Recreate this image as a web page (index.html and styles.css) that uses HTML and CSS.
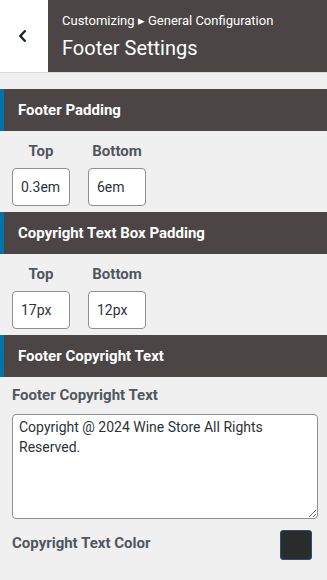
FILE: index.html
```html
<!DOCTYPE html>
<html>
<head>
<meta charset="utf-8">
<link rel="stylesheet" href="styles.css">
</head>
<body>
<header class="topbar">
  <div class="back">
    <svg width="12" height="14" viewBox="0 0 12 14"><path d="M8.5 1.5 L3.3 7 L8.5 12.5" fill="none" stroke="#1d2327" stroke-width="2.4"/></svg>
  </div>
  <div class="title-area">
    <div class="crumb">Customizing ▸ General Configuration</div>
    <div class="title">Footer Settings</div>
  </div>
</header>
<main class="content">
  <section class="section first">
    <h3 class="sec-head">Footer Padding</h3>
    <div class="pair">
      <div class="field"><label class="lbl">Top</label><input class="inp" value="0.3em"></div>
      <div class="field"><label class="lbl">Bottom</label><input class="inp" value="6em"></div>
    </div>
  </section>
  <section class="section">
    <h3 class="sec-head">Copyright Text Box Padding</h3>
    <div class="pair">
      <div class="field"><label class="lbl">Top</label><input class="inp" value="17px"></div>
      <div class="field"><label class="lbl">Bottom</label><input class="inp" value="12px"></div>
    </div>
  </section>
  <section class="section">
    <h3 class="sec-head">Footer Copyright Text</h3>
    <div class="block">
      <div class="blabel">Footer Copyright Text</div>
      <textarea class="ta">Copyright @ 2024 Wine Store All Rights Reserved.</textarea>
      <div class="color-row">
        <span class="blabel">Copyright Text Color</span>
        <span class="swatch"></span>
      </div>
    </div>
  </section>
</main>
</body>
</html>
```

FILE: styles.css
```css
* { box-sizing: border-box; }
html, body { margin: 0; padding: 0; }
body {
  background: #f0f0f1;
  font-family: Roboto, "Noto Sans", sans-serif;
  width: 327px;
  height: 580px;
  overflow: hidden;
}
.topbar {
  display: flex;
  height: 73px;
  border-bottom: 1px solid #dcdcde;
}
.back {
  width: 48px;
  background: #fff;
  display: flex;
  align-items: center;
  justify-content: center;
  padding-right: 2px;
}
.title-area {
  flex: 1;
  background: #4b4645;
  color: #fff;
  padding: 12px 0 0 14px;
}
.crumb {
  font-size: 13px;
  line-height: 18px;
}
.title {
  font-size: 20px;
  line-height: 26px;
  margin-top: 5px;
}
.content {
  padding-top: 16px;
}
.section { margin-bottom: 6px; }
.sec-head {
  margin: 0;
  height: 42px;
  background: #4b4645;
  border-left: 4px solid #0073aa;
  color: #fff;
  font-size: 15px;
  font-weight: 700;
  line-height: 42px;
  padding-left: 14px;
}
.pair {
  display: flex;
  gap: 18px;
  padding: 0 12px;
}
.field {
  width: 58px;
  display: flex;
  flex-direction: column;
  align-items: center;
}
.lbl {
  font-size: 15px;
  font-weight: 700;
  color: #50575e;
  line-height: 20px;
  margin-top: 10px;
  margin-bottom: 7px;
}
.inp {
  width: 58px;
  height: 38px;
  border: 1px solid #8c8f94;
  border-radius: 4px;
  background: #fff;
  font-family: Roboto, sans-serif;
  font-size: 14px;
  color: #2c3338;
  padding: 0 8px;
  margin: 0;
}
.block {
  padding: 0 9px 0 12px;
}
.blabel {
  display: block;
  font-size: 15px;
  font-weight: 700;
  color: #50575e;
  line-height: 20px;
  margin-top: 8px;
}
.ta {
  display: block;
  width: 306px;
  height: 105px;
  margin-top: 9px;
  border: 1px solid #8c8f94;
  border-radius: 4px;
  background: #fff;
  font-family: Roboto, sans-serif;
  font-size: 14px;
  line-height: 20px;
  color: #2c3338;
  padding: 2px 6px;
  resize: vertical;
}
.color-row {
  display: flex;
  justify-content: space-between;
  align-items: center;
  margin-top: 11px;
  padding-right: 6px;
}
.color-row .blabel { margin-top: 0; margin-bottom: 4px; }
.swatch {
  width: 32px;
  height: 30px;
  background: #2a2b2b;
  border: 1px solid #2b4f72;
  border-radius: 3px;
}
```
